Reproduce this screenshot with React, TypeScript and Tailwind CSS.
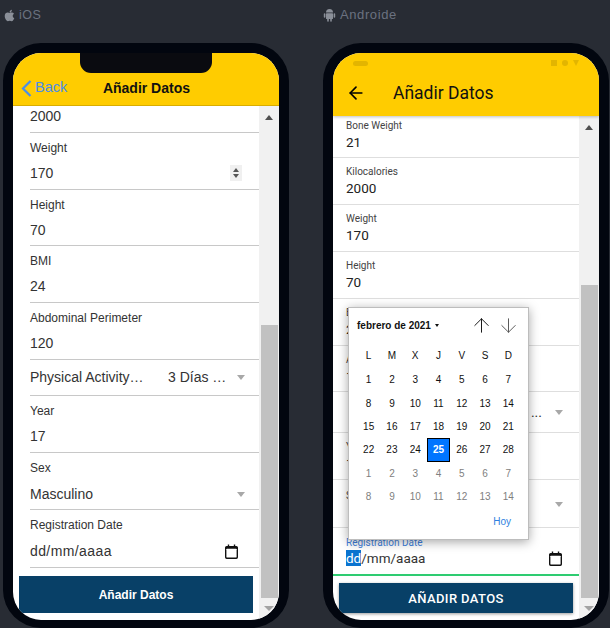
import type { ReactNode } from "react";
import { ArrowDown, ArrowLeft, ArrowUp } from "lucide-react";
import { FaApple } from "react-icons/fa";

const iosFont = "font-['Liberation_Sans',Arial,sans-serif]";
const androidFont = "font-['Roboto',Arial,sans-serif]";

const weekDays = ["L", "M", "X", "J", "V", "S", "D"];
const febDays = Array.from({ length: 28 }, (_, i) => i + 1);
const marDays = Array.from({ length: 14 }, (_, i) => i + 1);

function AndroidLogo() {
  return (
    <svg width="13" height="14" viewBox="0 0 13 14" fill="#8a8f98" className="mt-[3px] shrink-0">
      <path d="M3 4.6a3.5 3.5 0 0 1 7 0z" />
      <rect x="3" y="5.2" width="7" height="5.8" rx="0.6" />
      <rect x="0.8" y="5.2" width="1.6" height="4.6" rx="0.8" />
      <rect x="10.6" y="5.2" width="1.6" height="4.6" rx="0.8" />
      <rect x="4.2" y="10.5" width="1.6" height="3.2" rx="0.8" />
      <rect x="7.2" y="10.5" width="1.6" height="3.2" rx="0.8" />
    </svg>
  );
}

function CalendarIcon() {
  return (
    <svg width="13" height="15" viewBox="0 0 14 16" className="shrink-0">
      <path d="M3 0.5h1.5V2h5V0.5H11V2h1.2A1.8 1.8 0 0 1 14 3.8v10.4a1.8 1.8 0 0 1-1.8 1.8H1.8A1.8 1.8 0 0 1 0 14.2V3.8A1.8 1.8 0 0 1 1.8 2H3z" fill="#111" />
      <rect x="1.5" y="5" width="11" height="9.5" rx="0.5" fill="#fff" />
    </svg>
  );
}

function Caret() {
  return <span className="h-0 w-0 shrink-0 border-x-[4.5px] border-t-[5px] border-x-transparent border-t-[#a8a8a8]" />;
}

function Scrollbar({ thumbTop }: { thumbTop: string }) {
  return (
    <div className="flex w-[20px] shrink-0 flex-col items-center bg-[#f1f1f1]">
      <div className={`flex w-full shrink-0 justify-center ${thumbTop}`}>
        <span className="mt-[9px] h-0 w-0 border-x-[4.5px] border-b-[5px] border-x-transparent border-b-[#505050]" />
      </div>
      <div className="w-[17px] flex-1 bg-[#c1c1c1]" />
      <div className="flex h-[22px] w-full shrink-0 justify-center">
        <span className="mt-[8px] h-0 w-0 border-x-[5px] border-t-[5px] border-x-transparent border-t-[#a3a3a3]" />
      </div>
    </div>
  );
}

function IosField({ label, value, children, h = "h-[57px]" }: { label: string; value: string; children?: ReactNode; h?: string }) {
  return (
    <div className={`flex ${h} shrink-0 flex-col border-b border-[#c8c8c8] pt-[8px] text-[#333]`}>
      <span className="text-[12px] leading-[14px]">{label}</span>
      <div className="mt-[10px] flex items-center justify-between pr-[17px]">
        <span className="text-[14px] leading-[16px]">{value}</span>
        {children}
      </div>
    </div>
  );
}

function AndroidField({ label, value, cls = "h-[47px] pt-[7px]" }: { label: string; value: string; cls?: string }) {
  return (
    <div className={`flex ${cls} shrink-0 flex-col border-b border-[#dedede] pl-[13px] text-[#222]`}>
      <span className="text-[10px] leading-[13px] text-[#444]">{label}</span>
      <span className="mt-[2px] text-[13.5px] leading-[16px]">{value}</span>
    </div>
  );
}

function Phone({ children }: { children: ReactNode }) {
  return (
    <div className="h-[585px] w-[286px] rounded-[38px] border-x-[10px] border-b-[8px] border-t-[10px] border-[#02060f]">
      <div className="relative flex h-full flex-col overflow-hidden rounded-[28px] bg-white">{children}</div>
    </div>
  );
}

function DatePopup() {
  return (
    <div className={`absolute left-[15px] top-[254px] h-[233px] w-[181px] border border-[#bdbdbd] bg-white pl-[8px] pr-[8px] shadow-[0_2px_10px_rgba(0,0,0,0.35)] ${iosFont}`}>
      <div className="flex h-[34px] items-center">
        <span className="text-[10px] font-bold text-[#111]">febrero de 2021</span>
        <span className="ml-[4px] h-0 w-0 border-x-[2.5px] border-t-[3.5px] border-x-transparent border-t-[#111]" />
        <ArrowUp size={23} strokeWidth={1} className="ml-[31px] shrink-0 text-[#111]" />
        <ArrowDown size={23} strokeWidth={1} className="ml-[4px] shrink-0 text-[#555]" />
      </div>
      <div className="mt-[1px] grid w-[163px] grid-cols-7 text-center text-[10px] text-[#111]">
        {weekDays.map((d) => (
          <span key={d} className="flex h-[24px] items-center justify-center">{d}</span>
        ))}
      </div>
      <div className="mt-[1px] grid w-[163px] grid-cols-7 text-center text-[10px]">
        {febDays.map((d) => (
          <span
            key={d}
            className={
              d === 25
                ? "flex h-[23.4px] items-center justify-center border border-black bg-[#0075ff] font-bold text-white"
                : "flex h-[23.4px] items-center justify-center text-[#111]"
            }
          >
            {d}
          </span>
        ))}
        {marDays.map((d) => (
          <span key={`m${d}`} className="flex h-[23.4px] items-center justify-center text-[#808080]">{d}</span>
        ))}
      </div>
      <div className="mt-[6px] flex justify-end pr-[9px] text-[10px] text-[#2f7fe0]">Hoy</div>
    </div>
  );
}

function IosScreen() {
  return (
    <Phone>
      <div className={`relative flex h-[53px] shrink-0 items-center justify-between border-b border-[#d9ad00] bg-[#ffcc00] pl-[8px] pr-[89px] pt-[18px] ${iosFont}`}>
        <div className="absolute left-[67px] top-0 h-[20px] w-[132px] rounded-b-[11px] bg-[#0a0b10]" />
        <div className="flex items-center gap-[3px] text-[14.5px] text-[#4a8ee8]">
          <svg width="11" height="17" viewBox="0 0 11 17" fill="none" stroke="#4a8ee8" strokeWidth="2.2">
            <path d="M9.5 1 2 8.5 9.5 16" />
          </svg>
          Back
        </div>
        <span className="text-[14px] font-bold text-[#111]">Añadir Datos</span>
      </div>
      <div className={`flex min-h-0 flex-1 ${iosFont}`}>
        <div className="flex w-[246px] shrink-0 flex-col">
          <div className="flex flex-1 flex-col pl-[17px]">
            <div className="flex h-[27px] shrink-0 items-start border-b border-[#c8c8c8] text-[14px] leading-[20px] text-[#333]">2000</div>
            <IosField label="Weight" value="170">
              <span className="flex h-[16px] w-[12px] flex-col items-center justify-center gap-[2px] bg-[#f0f0f0]">
                <span className="h-0 w-0 border-x-[3.5px] border-b-[4px] border-x-transparent border-b-[#555]" />
                <span className="h-0 w-0 border-x-[3.5px] border-t-[4px] border-x-transparent border-t-[#555]" />
              </span>
            </IosField>
            <IosField label="Height" value="70" h="h-[56px]" />
            <IosField label="BMI" value="24" />
            <IosField label="Abdominal Perimeter" value="120" />
            <div className="flex h-[36px] shrink-0 items-center border-b border-[#c8c8c8] pr-[14px] text-[14px] text-[#333]">
              <span className="w-[138px]">Physical Activity…</span>
              <span className="flex-1">3 Días …</span>
              <Caret />
            </div>
            <IosField label="Year" value="17" />
            <div className="flex h-[57px] shrink-0 flex-col border-b border-[#c8c8c8] pt-[8px] text-[#333]">
              <span className="text-[12px] leading-[14px]">Sex</span>
              <div className="mt-[11px] flex items-center justify-between pr-[14px]">
                <span className="text-[14px] leading-[16px]">Masculino</span>
                <Caret />
              </div>
            </div>
            <div className="flex h-[58px] shrink-0 flex-col border-b border-[#c8c8c8] pt-[8px] text-[#333]">
              <span className="text-[12px] leading-[14px]">Registration Date</span>
              <div className="mt-[11px] flex items-center justify-between pr-[21px]">
                <span className="text-[14px] leading-[16px] tracking-[0.4px]">dd/mm/aaaa</span>
                <CalendarIcon />
              </div>
            </div>
          </div>
          <div className="mb-[7px] ml-[6px] mr-[6px] flex h-[37px] shrink-0 items-center justify-center bg-[#084067] text-[12px] font-bold text-white">
            Añadir Datos
          </div>
        </div>
        <Scrollbar thumbTop="h-[219px]" />
      </div>
    </Phone>
  );
}

function AndroidScreen() {
  return (
    <Phone>
      <div className={`z-10 flex h-[63px] shrink-0 flex-col bg-[#ffcc00] shadow-[0_1px_3px_rgba(0,0,0,0.25)] ${androidFont}`}>
        <div className="flex h-[20px] items-center justify-between pl-[20px] pr-[20px]">
          <span className="h-[5px] w-[15px] rounded-full bg-[#e3b500]" />
          <div className="flex items-center gap-[5px]">
            <span className="h-[6px] w-[6px] bg-[#e3b500]" />
            <span className="h-[6px] w-[6px] rounded-full bg-[#e3b500]" />
            <span className="h-0 w-0 border-x-[3.5px] border-t-[6px] border-x-transparent border-t-[#e3b500]" />
          </div>
        </div>
        <div className="mt-[1px] flex items-center pl-[13px]">
          <ArrowLeft size={20} strokeWidth={2} className="text-black" />
          <span className="ml-[27px] text-[17.5px] leading-[38px] text-[#111]">Añadir Datos</span>
        </div>
      </div>
      <div className={`flex min-h-0 flex-1 ${androidFont}`}>
        <div className="flex w-[246px] shrink-0 flex-col">
          <AndroidField label="Bone Weight" value="21" cls="h-[42px] pt-[3px]" />
          <AndroidField label="Kilocalories" value="2000" />
          <AndroidField label="Weight" value="170" />
          <AndroidField label="Height" value="70" />
          <AndroidField label="BMI" value="24" />
          <AndroidField label="Abdominal Perimeter" value="120" cls="h-[46px] pt-[7px]" />
          <div className="flex h-[41px] shrink-0 items-center justify-between border-b border-[#dedede] pl-[16px] pr-[16px] text-[14px] text-[#333]">
            <span>Physical Activity</span>
            <span className="ml-auto mr-[13px]">3 Días ...</span>
            <Caret />
          </div>
          <AndroidField label="Year" value="17" />
          <div className="flex h-[48px] shrink-0 items-center justify-between border-b border-[#dedede] pl-[13px] pr-[16px] text-[#333]">
            <div className="flex flex-col">
              <span className="text-[10px] leading-[13px] text-[#444]">Sex</span>
              <span className="pl-[3px] text-[13.5px] leading-[16px]">Masculino</span>
            </div>
            <span className="mt-[1px] flex">
              <Caret />
            </span>
          </div>
          <div className="flex h-[48px] shrink-0 flex-col border-b-2 border-[#2ecc71] pl-[13px] pt-[8px]">
            <span className="text-[10px] leading-[13px] text-[#3f7fdc]">Registration Date</span>
            <div className="mt-[1px] flex items-center justify-between pr-[17px]">
              <span className="text-[13.5px] leading-[16px] text-[#333]">
                <span className="bg-[#0a74d0] text-white">dd</span>/mm/aaaa
              </span>
              <CalendarIcon />
            </div>
          </div>
          <div className="ml-[6px] mr-[6px] mt-[7px] flex h-[30px] shrink-0 items-center justify-center bg-[#084067] pt-[1px] text-[13px] font-medium tracking-[0.4px] text-white shadow-[0_1px_3px_rgba(0,0,0,0.4)]">
            AÑADIR DATOS
          </div>
        </div>
        <Scrollbar thumbTop="h-[169px]" />
      </div>
      <DatePopup />
    </Phone>
  );
}

export default function App() {
  return (
    <div className="flex h-[628px] w-[610px] gap-[34px] overflow-hidden bg-[#282c34] pl-[3px]">
      <div className="flex w-[286px] shrink-0 flex-col">
        <div className={`flex h-[43px] shrink-0 items-start gap-[3px] pt-[6px] text-[12.5px] text-[#6b7280] ${iosFont}`}>
          <FaApple size={13} className="mt-[3px] text-[#8a8f98]" />
          <span className="tracking-[0.5px]">iOS</span>
        </div>
        <IosScreen />
      </div>
      <div className="flex w-[286px] shrink-0 flex-col">
        <div className={`flex h-[43px] shrink-0 items-start gap-[4px] pt-[5px] text-[13px] text-[#6b7280] ${iosFont}`}>
          <AndroidLogo />
          <span className="tracking-[0.6px]">Androide</span>
        </div>
        <AndroidScreen />
      </div>
    </div>
  );
}
